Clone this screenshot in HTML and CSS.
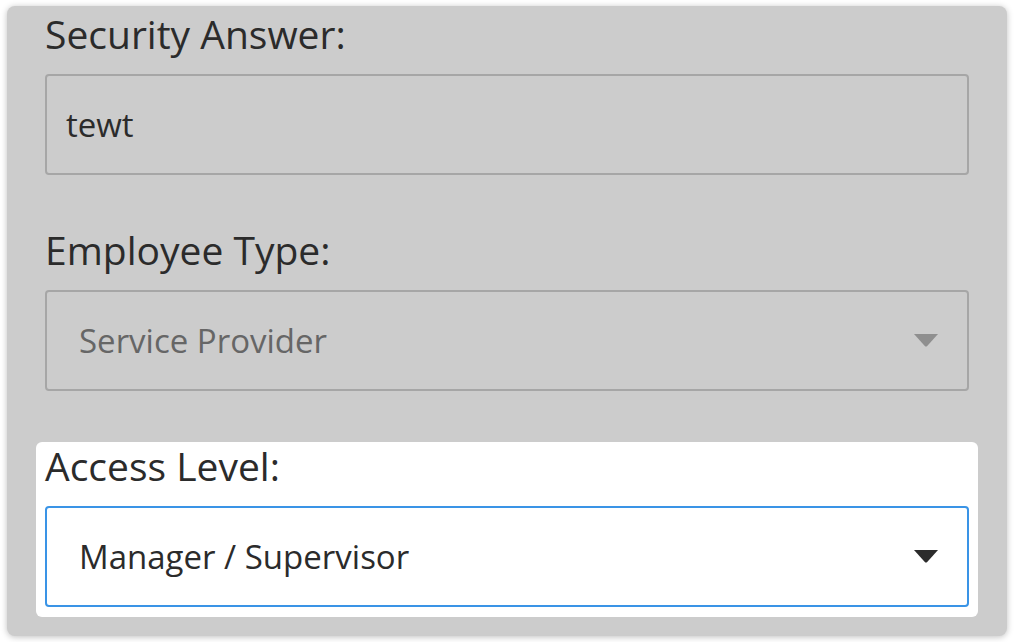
FILE: index.html
```html
<!DOCTYPE html>
<html lang="en">
<head>
    <meta charset="UTF-8">
    <meta name="viewport" content="width=device-width, initial-scale=1.0">
    <title>Employee Details</title>
    <link rel="stylesheet" href="styles.css">
</head>
<body>
    <div class="card">
        <div class="field">
            <label for="answer">Security Answer:</label>
            <div class="input">tewt</div>
        </div>

        <div class="field">
            <label for="type">Employee Type:</label>
            <div class="select disabled">
                <span>Service Provider</span>
                <svg class="caret" width="24" height="13" viewBox="0 0 24 13"><path d="M0 0 H24 L13.2 12 Q12 13.2 10.8 12 Z"/></svg>
            </div>
        </div>

        <div class="field active">
            <label for="level">Access Level:</label>
            <div class="select focused">
                <span>Manager / Supervisor</span>
                <svg class="caret" width="24" height="13" viewBox="0 0 24 13"><path d="M0 0 H24 L13.2 12 Q12 13.2 10.8 12 Z"/></svg>
            </div>
        </div>
    </div>
</body>
</html>
```

FILE: styles.css
```css
/* Page */
body {
    margin: 0;
    padding: 6px 8px 6px 7px;
    background-color: #fff;
    font-family: "Open Sans", Lato, sans-serif;
}

.card {
    background-color: #cccccc;
    border-radius: 8px;
    box-shadow: 0 1px 6px rgba(0, 0, 0, 0.25);
    padding: 4px 38px 19px 38px;
    display: flex;
    flex-direction: column;
    gap: 41px;
}

.field {
    display: flex;
    flex-direction: column;
    margin: 0 -9px;
    padding: 8px 9px 10px 9px;
    border-radius: 6px;
}

.field.active {
    background-color: #fff;
}

label {
    font-size: 39px;
    line-height: 32px;
    margin-bottom: 24px;
    color: #2b2b2b;
}

.input,
.select {
    height: 101px;
    box-sizing: border-box;
    border: 2px solid #a6a6a6;
    border-radius: 4px;
    display: flex;
    align-items: center;
    font-size: 33px;
    color: #2b2b2b;
}

.input {
    padding-left: 19px;
}

.select {
    padding: 0 29px 0 32px;
    justify-content: space-between;
}

.select.disabled {
    color: #666;
}

.select.disabled .caret {
    fill: #8f8f8f;
}

.select.focused {
    background-color: #fff;
    border-color: #3a94e6;
}

.select.focused .caret {
    fill: #2b2b2b;
}
```
